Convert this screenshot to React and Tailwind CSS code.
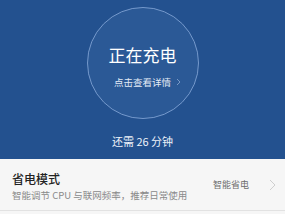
export default function App() {
  const font = { fontFamily: '"Noto Sans CJK SC", "Noto Sans", sans-serif' };
  return (
    <div className="w-[285px] h-[214px] overflow-hidden bg-[#f6f6f6]" style={font}>
      {/* Charging header */}
      <div className="h-[159px] bg-[#23518f] flex flex-col items-center pt-[7px]">
        <div className="w-[112px] h-[112px] rounded-full border-[1.5px] border-[#7599cc] bg-[#2b5996] flex flex-col items-center">
          <div className="mt-[37px] text-[17px] leading-[20px] text-white">正在充电</div>
          <div className="mt-[11px] flex items-center gap-[5px] text-[9.5px] leading-[12px] text-[#e3ebf6]">
            <span className="ml-[10px]">点击查看详情</span>
            <svg width="5" height="8" viewBox="0 0 5 8" fill="none">
              <path d="M1 1l3 3-3 3" stroke="#8ea9d2" strokeWidth="0.8" />
            </svg>
          </div>
        </div>
        <div className="mt-[15px] text-[11px] leading-[14px] text-[#eef3fa]">还需 26 分钟</div>
      </div>

      {/* Power saving mode row */}
      <div className="h-[52px] border-b border-[#e2e2e2] flex items-center pl-[12px] pr-[9px]">
        <div className="flex-1 flex flex-col pt-[2px]">
          <div className="text-[12px] leading-[15px] font-medium text-[#222]">省电模式</div>
          <div className="mt-[3px] text-[9.5px] leading-[12px] text-[#8a8a8a]">智能调节 CPU 与联网频率，推荐日常使用</div>
        </div>
        <div className="text-[9px] leading-[12px] text-[#6e6e6e] mr-[20px]">智能省电</div>
        <svg width="7" height="12" viewBox="0 0 7 12" fill="none">
          <path d="M1 1l5 5-5 5" stroke="#cfcfcf" strokeWidth="1" />
        </svg>
      </div>
    </div>
  );
}
